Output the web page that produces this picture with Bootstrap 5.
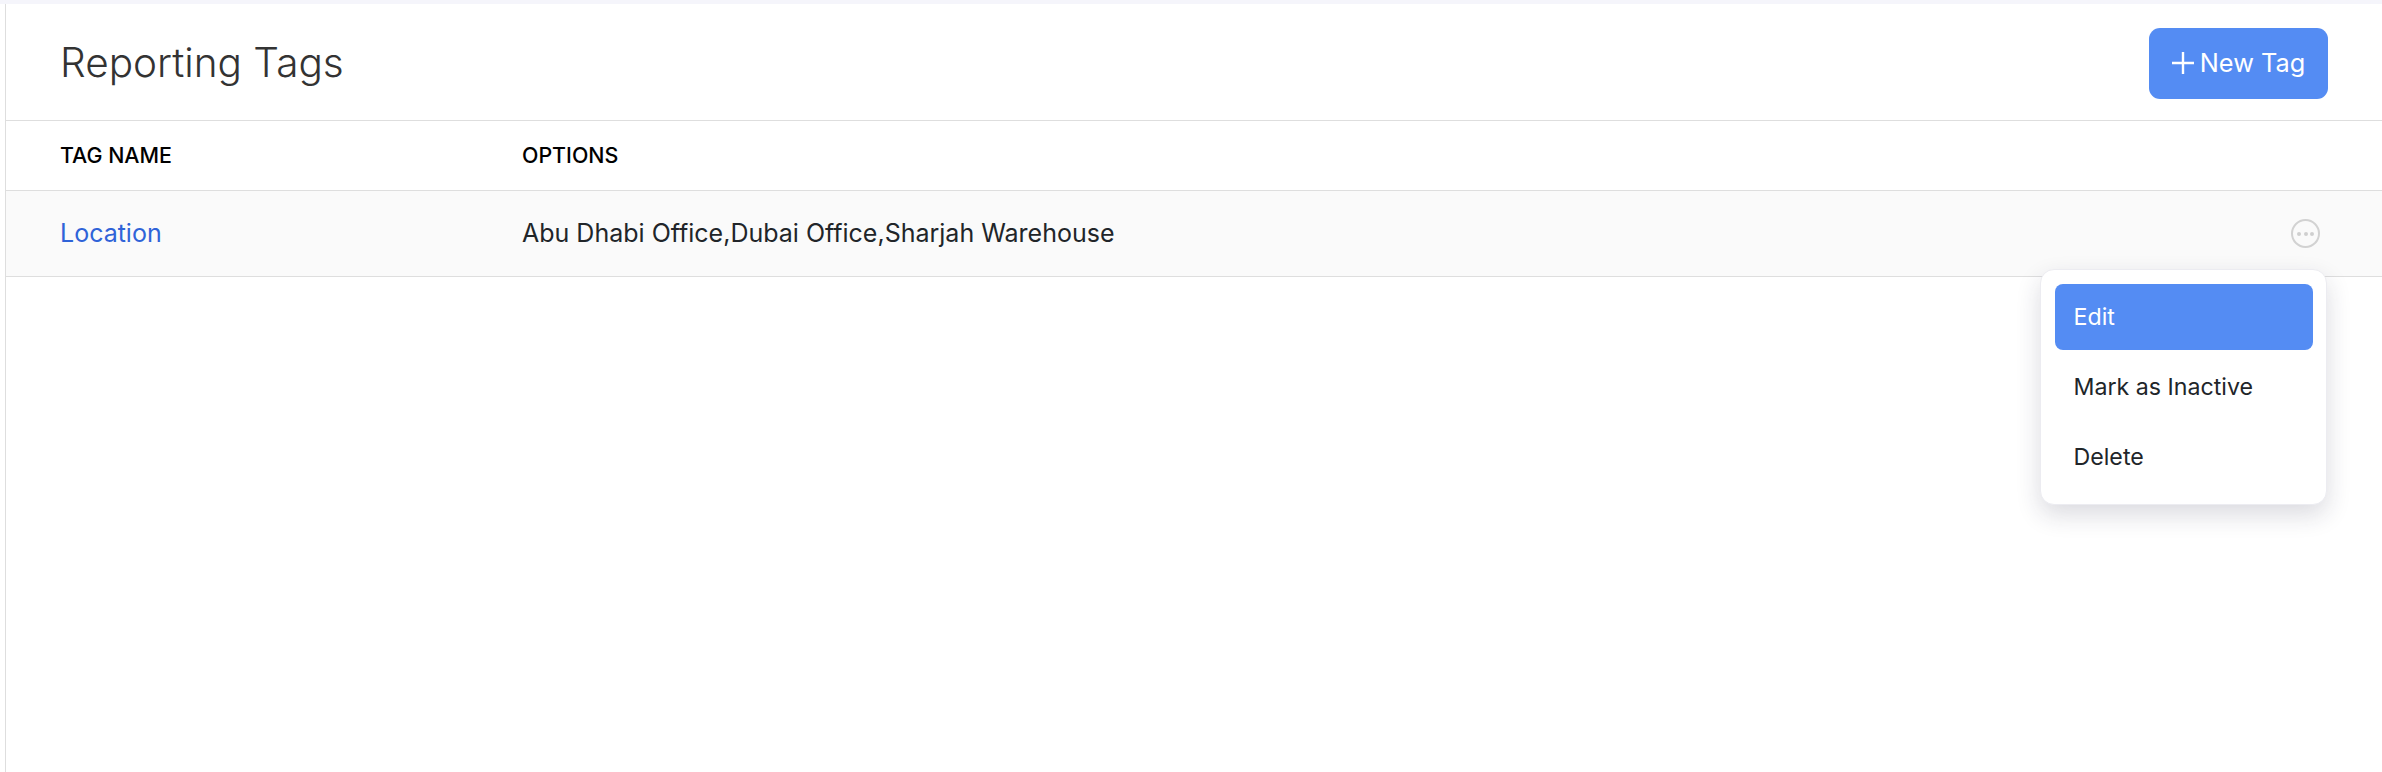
<!DOCTYPE html>
<html lang="en">
<head>
<meta charset="utf-8">
<title>Reporting Tags</title>
<link href="https://cdn.jsdelivr.net/npm/bootstrap@5.3.0/dist/css/bootstrap.min.css" rel="stylesheet">
<style>
html,body{height:772px;overflow:hidden;background:#fff;font-family:Inter,"Liberation Sans",sans-serif;}
.app-shell{height:772px;border-top:4px solid #f5f5fb;padding-left:5px;}
.main-pane{height:768px;border-left:1px solid #dedede;position:relative;}
.page-head{height:117px;padding:2px 54px 0 54px;border-bottom:1px solid #dedede;}
.page-title{font-size:40.5px;font-weight:350;color:#333;margin:0;line-height:1;}
.new-btn{width:179px;height:71px;background:#548cf3;border:0;border-radius:11px;color:#fff;font-size:25.3px;font-weight:400;gap:6px;}
.new-btn:hover{background:#548cf3;color:#fff;}
.tag-row{display:flex;align-items:center;padding-left:54px;border-bottom:1px solid #dedede;}
.tag-head{height:70px;font-size:21.4px;font-weight:500;color:#000;}
.tag-body{height:86px;background:#fafafa;font-size:25px;color:#212529;padding-right:62px;}
.cell-name{width:462px;flex:none;}
.tag-link{color:#2f63d8;text-decoration:none;}
.more-btn{width:29px;height:29px;border:2px solid #d2d2d2;border-radius:50%;background:none;padding:0;gap:2.5px;}
.more-btn i{width:4px;height:4px;border-radius:50%;background:#cfcfcf;display:block;}
.row-menu{position:absolute;left:2034px;top:265px;width:287px;height:236px;margin:0;padding:14px 13px 14px 14px;display:block;border:1px solid #ececf1;border-radius:14px;background:#fff;box-shadow:0 10px 24px rgba(30,30,60,.16);}
.row-menu .dropdown-item{height:66px;margin-bottom:4px;padding:0 18.5px;display:flex;align-items:center;font-size:23.2px;color:#212529;border-radius:8px;}
.row-menu .dropdown-item.active{background:#548cf3;color:#fff;}
</style>
</head>
<body>
<div class="app-shell">
  <div class="main-pane">
    <header class="page-head d-flex align-items-center justify-content-between">
      <h1 class="page-title">Reporting Tags</h1>
      <button type="button" class="btn new-btn d-flex align-items-center justify-content-center p-0">
        <svg width="22" height="22" viewBox="0 0 22 22" aria-hidden="true"><path d="M11 0v22M0 11h22" stroke="#fff" stroke-width="2.4" fill="none"/></svg>
        <span>New Tag</span>
      </button>
    </header>
    <div class="tag-row tag-head">
      <div class="cell-name">TAG NAME</div>
      <div>OPTIONS</div>
    </div>
    <div class="tag-row tag-body">
      <div class="cell-name"><a href="#" class="tag-link">Location</a></div>
      <div class="flex-grow-1">Abu Dhabi Office,Dubai Office,Sharjah Warehouse</div>
      <button type="button" class="more-btn d-flex align-items-center justify-content-center" aria-label="More"><i></i><i></i><i></i></button>
    </div>
    <ul class="row-menu list-unstyled">
      <li><a class="dropdown-item active" href="#">Edit</a></li>
      <li><a class="dropdown-item" href="#">Mark as Inactive</a></li>
      <li><a class="dropdown-item" href="#">Delete</a></li>
    </ul>
  </div>
</div>
<script src="https://cdn.jsdelivr.net/npm/bootstrap@5.3.0/dist/js/bootstrap.bundle.min.js"></script>
</body>
</html>
